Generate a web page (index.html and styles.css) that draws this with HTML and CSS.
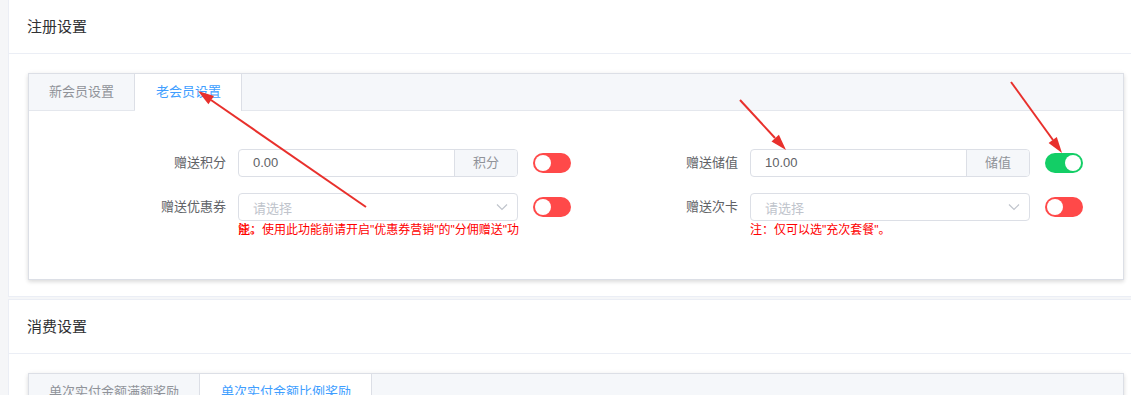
FILE: index.html
```html
<!DOCTYPE html>
<html lang="zh-CN">
<head>
  <meta charset="UTF-8">
  <meta name="viewport" content="width=device-width, initial-scale=1.0">
  <title>会员设置</title>
  <link rel="stylesheet" href="styles.css">
</head>
<body>
  <div class="page">
    <section class="panel panel-first">
      <div class="panel-head">注册设置</div>
      <div class="panel-body">
        <div class="tabs">
          <div class="tabs-nav">
            <div class="tab">新会员设置</div>
            <div class="tab active">老会员设置</div>
          </div>
          <div class="tabs-content">
            <div class="form-grid">
              <div class="form-item">
                <label class="form-label">赠送积分</label>
                <div class="form-control">
                  <div class="input-group">
                    <span class="input-value">0.00</span>
                    <span class="input-append">积分</span>
                  </div>
                </div>
                <span class="switch"></span>
              </div>
              <div class="form-item">
                <label class="form-label">赠送储值</label>
                <div class="form-control">
                  <div class="input-group">
                    <span class="input-value">10.00</span>
                    <span class="input-append">储值</span>
                  </div>
                </div>
                <span class="switch on"></span>
              </div>
              <div class="form-item">
                <label class="form-label">赠送优惠券</label>
                <div class="form-control">
                  <div class="select">
                    <span class="placeholder">请选择</span>
                    <svg class="select-arrow" width="12" height="8" viewBox="0 0 12 8"><polyline points="1,1.5 6,6.5 11,1.5" fill="none" stroke="#c0c4cc" stroke-width="1.2"/></svg>
                  </div>
                  <div class="tip">注：使用此功能前请开启"优惠券营销"的"分佣赠送"功<span class="tip-overflow">能。</span></div>
                </div>
                <span class="switch"></span>
              </div>
              <div class="form-item">
                <label class="form-label">赠送次卡</label>
                <div class="form-control">
                  <div class="select">
                    <span class="placeholder">请选择</span>
                    <svg class="select-arrow" width="12" height="8" viewBox="0 0 12 8"><polyline points="1,1.5 6,6.5 11,1.5" fill="none" stroke="#c0c4cc" stroke-width="1.2"/></svg>
                  </div>
                  <div class="tip">注：仅可以选"充次套餐"。</div>
                </div>
                <span class="switch"></span>
              </div>
            </div>
          </div>
        </div>
      </div>
    </section>

    <section class="panel">
      <div class="panel-head">消费设置</div>
      <div class="panel-body">
        <div class="tabs">
          <div class="tabs-nav">
            <div class="tab">单次实付金额满额奖励</div>
            <div class="tab active">单次实付金额比例奖励</div>
          </div>
          <div class="tabs-content tall"></div>
        </div>
      </div>
    </section>
  </div>

  <!-- red annotation arrows drawn over the screenshot -->
  <svg class="marks" width="1131" height="395" viewBox="0 0 1131 395">
    <g stroke="#e8302c" stroke-width="2" fill="#e8302c">
      <line x1="366" y1="207" x2="211" y2="100"/>
      <polygon points="198,91 208.4,104.2 214,96" stroke="none"/>
      <line x1="740" y1="100" x2="775" y2="138"/>
      <polygon points="786,150 778.9,134.8 771.5,141.6" stroke="none"/>
      <line x1="1011" y1="82" x2="1053" y2="140"/>
      <polygon points="1062,153 1056.8,137.1 1048.6,142.9" stroke="none"/>
    </g>
  </svg>
</body>
</html>
```

FILE: styles.css
```css
html, body {
  overflow: hidden;
}
body {
  margin: 0;
  background: #f5f6f8;
  font-family: "Liberation Sans", "Noto Sans CJK SC", sans-serif;
  color: #606266;
  position: relative;
}
.page {
  padding-left: 8px;
  width: 1136px;
}
.panel {
  background: #fff;
  border: 1px solid #ebeef5;
  margin-bottom: 2px;
}
.panel-first {
  margin-top: -1px;
}
.panel-head {
  height: 53px;
  line-height: 53px;
  padding-left: 18px;
  font-size: 15px;
  color: #303133;
  border-bottom: 1px solid #ebeef5;
}
.panel-body {
  padding: 19px 19px 16px;
}
.tabs {
  border: 1px solid #dcdfe6;
  background: #fff;
  box-shadow: 0 2px 4px rgba(0,0,0,0.12), 0 0 6px rgba(0,0,0,0.04);
}
.tabs-nav {
  display: flex;
  background: #f5f7fa;
  border-bottom: 1px solid #e4e7ed;
  height: 36px;
}
.tab {
  padding: 0 20px;
  line-height: 36px;
  font-size: 13px;
  color: #909399;
  border-right: 1px solid transparent;
}
.tab:first-child {
  border-right-color: #dcdfe6;
}
.tab.active {
  padding: 0 20px 0 21px;
  background: #fff;
  color: #409eff;
  border-right: 1px solid #dcdfe6;
  height: 37px;
}
.tabs-content {
  padding: 38px 15px 0;
  height: 130px;
}
.tabs-content.tall {
  height: 200px;
}
.form-grid {
  display: grid;
  grid-template-columns: 512px 512px;
  row-gap: 16px;
}
.form-item {
  display: flex;
  align-items: flex-start;
}
.form-item > * {
  flex: none;
}
.form-label {
  width: 182px;
  padding-right: 12px;
  text-align: right;
  font-size: 13px;
  line-height: 28px;
  color: #606266;
}
.form-control {
  width: 280px;
  position: relative;
}
.input-group {
  display: flex;
  height: 26px;
  border: 1px solid #dcdfe6;
  border-radius: 4px;
  overflow: hidden;
}
.input-value {
  flex: 1;
  padding-left: 14px;
  line-height: 26px;
  font-size: 13px;
  color: #606266;
}
.input-append {
  width: 62px;
  background: #f5f7fa;
  border-left: 1px solid #dcdfe6;
  text-align: center;
  line-height: 26px;
  font-size: 13px;
  color: #909399;
}
.select {
  display: flex;
  align-items: center;
  justify-content: space-between;
  height: 26px;
  border: 1px solid #dcdfe6;
  border-radius: 4px;
  padding: 0 9px 0 14px;
}
.placeholder {
  font-size: 13px;
  color: #c0c4cc;
}
.tip {
  margin-top: 2px;
  font-size: 12px;
  line-height: 14px;
  color: #f00;
  white-space: nowrap;
  position: relative;
}
.tip-overflow {
  position: absolute;
  left: 0;
  top: 0;
}
.switch {
  position: relative;
  margin: 4px 0 0 15px;
  width: 38px;
  height: 20px;
  border-radius: 10px;
  background: #ff4949;
}
.switch::after {
  content: "";
  position: absolute;
  top: 2px;
  left: 2px;
  width: 16px;
  height: 16px;
  border-radius: 50%;
  background: #fff;
}
.switch.on {
  background: #13ce66;
}
.switch.on::after {
  left: 20px;
}
.marks {
  position: absolute;
  top: 0;
  left: 0;
  pointer-events: none;
}
```
